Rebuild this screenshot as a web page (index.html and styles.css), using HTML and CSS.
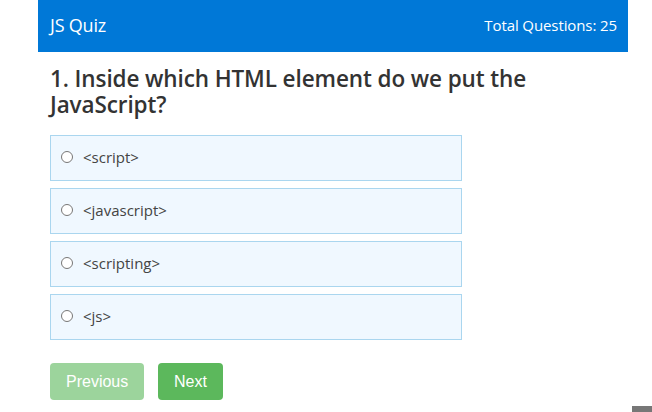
FILE: index.html
```html
<!DOCTYPE html>
<html>
<head>
<meta charset="utf-8">
<link rel="stylesheet" href="styles.css">
</head>
<body>
<div class="app">
  <header class="topbar">
    <div class="brand">JS Quiz</div>
    <div class="total">Total Questions: 25</div>
  </header>
  <main class="content">
    <h2 class="question">1. Inside which HTML element do we put the JavaScript?</h2>
    <div class="options">
      <label class="option"><input type="radio" name="q"><span>&lt;script&gt;</span></label>
      <label class="option"><input type="radio" name="q"><span>&lt;javascript&gt;</span></label>
      <label class="option"><input type="radio" name="q"><span>&lt;scripting&gt;</span></label>
      <label class="option"><input type="radio" name="q"><span>&lt;js&gt;</span></label>
    </div>
    <div class="actions">
      <button class="btn disabled">Previous</button>
      <button class="btn">Next</button>
    </div>
  </main>
</div>
<div class="corner"></div>
</body>
</html>
```
FILE: styles.css
```css
html, body {
  margin: 0;
  padding: 0;
  background: #fff;
}
body {
  font-family: "Open Sans", "Noto Sans", sans-serif;
  color: #333;
}
.app {
  width: 590px;
  margin-left: 38px;
}
.topbar {
  height: 52px;
  background: #0078d7;
  color: #fff;
  display: flex;
  align-items: center;
  justify-content: space-between;
  padding: 0 11px 2px 12px;
  box-sizing: border-box;
}
.brand {
  font-size: 18px;
  letter-spacing: -0.2px;
}
.total {
  font-size: 15px;
  letter-spacing: -0.1px;
}
.content {
  padding: 14px 12px 0 12px;
}
.question {
  margin: 0 0 17px 0;
  font-size: 22.5px;
  font-weight: 600;
  line-height: 26px;
  color: #333;
  width: 540px;
  letter-spacing: -0.1px;
}
.options {
  display: flex;
  flex-direction: column;
  gap: 7px;
  width: 412px;
}
.option {
  display: flex;
  align-items: center;
  height: 46px;
  box-sizing: border-box;
  background: #f0f8ff;
  border: 1px solid #aad6ef;
  padding: 0 10px 2px 10px;
  font-size: 15px;
  color: #444;
}
.option input {
  margin: 0 10px 0 0;
  width: 12px;
  height: 12px;
  accent-color: #777;
}
.actions {
  display: flex;
  gap: 14px;
  margin-top: 23px;
}
.btn {
  font-family: "Liberation Sans", Arial, sans-serif;
  font-size: 16px;
  color: #fff;
  background: #5cb85c;
  border: none;
  border-radius: 4px;
  height: 37px;
  padding: 0 16px;
}
.btn.disabled {
  opacity: 0.6;
  width: 94px;
}
.corner {
  position: fixed;
  right: 0;
  bottom: 0;
  width: 20px;
  height: 6px;
  background: #777;
}
```
